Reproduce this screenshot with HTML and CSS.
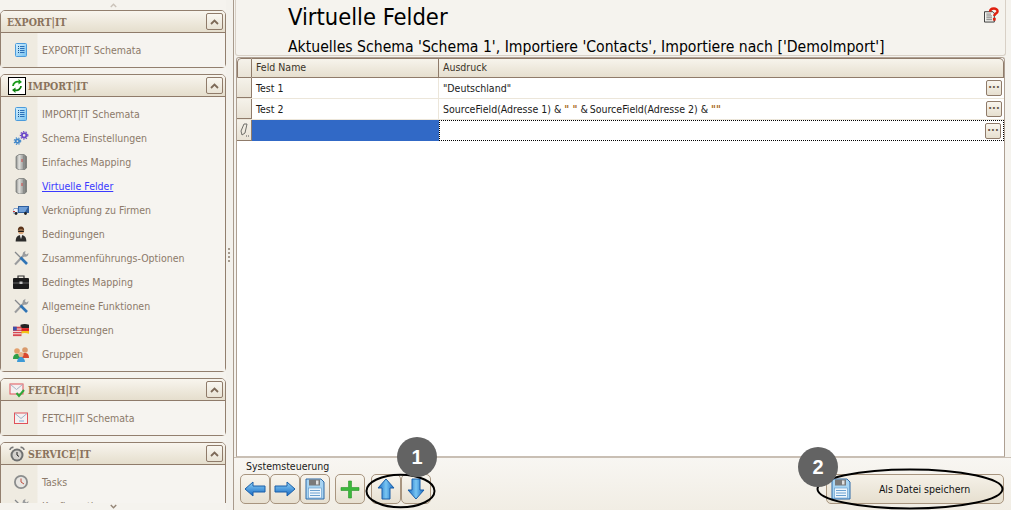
FILE: index.html
```html
<!DOCTYPE html>
<html lang="de">
<head>
<meta charset="utf-8">
<title>Virtuelle Felder</title>
<link rel="stylesheet" href="styles.css">
</head>
<body>
<svg class="defs" width="0" height="0" aria-hidden="true">
  <defs>
    <linearGradient id="blueG" x1="0" y1="0" x2="1" y2="0"><stop offset="0" stop-color="#1468c4"/><stop offset=".5" stop-color="#79c6f2"/><stop offset="1" stop-color="#1468c4"/></linearGradient>
    <linearGradient id="blueH" x1="0" y1="0" x2="0" y2="1"><stop offset="0" stop-color="#8fd3f7"/><stop offset="1" stop-color="#1468c4"/></linearGradient>
    <linearGradient id="paleB" x1="0" y1="0" x2="1" y2="1"><stop offset="0" stop-color="#d6f0fd"/><stop offset="1" stop-color="#76c2f0"/></linearGradient>
    <linearGradient id="barrel" x1="0" y1="0" x2="1" y2="0"><stop offset="0" stop-color="#8a8c8a"/><stop offset=".3" stop-color="#e3e3df"/><stop offset=".55" stop-color="#b5b6b3"/><stop offset="1" stop-color="#6e706e"/></linearGradient>
    <symbol id="i-list" viewBox="0 0 16 16"><rect x="2.500" y="1.500" width="11" height="13" rx="1" fill="url(#paleB)" stroke="#4a9bdc"/><path d="M5 4.500h1M5 6.500h1M5 8.500h1M5 10.500h1" stroke="#17508f"/><path d="M7 4.500h4.500M7 6.500h4.500M7 8.500h4.500M7 10.500h4.500" stroke="#2b6fb8"/></symbol>
    <symbol id="i-gears" viewBox="0 0 18 16"><circle cx="12.500" cy="5" r="2.500" fill="none" stroke="#6a45c8" stroke-width="2"/><circle cx="12.500" cy="5" r="4.200" fill="none" stroke="#6a45c8" stroke-width="1.300" stroke-dasharray="1.500 1.500"/><circle cx="5" cy="11.500" r="2" fill="none" stroke="#3f86c9" stroke-width="2"/><circle cx="5" cy="11.500" r="3.700" fill="none" stroke="#3f86c9" stroke-width="1.200" stroke-dasharray="1.500 1.500"/></symbol>
    <symbol id="i-server" viewBox="0 0 16 16"><path d="M3 2.500 6 .5h5l2.500 2v11.500l-2.500 2H6l-3-2z" fill="url(#barrel)" stroke="#707270" stroke-width=".7"/><path d="M10.500 1.500v14" stroke="#8a8c8a"/><path d="M9 5v3" stroke="#c44"/></symbol>
    <symbol id="i-truck" viewBox="0 0 16 16"><path d="M5 4h11v7H5z" fill="#2f5f9e"/><path d="M6 5h9l-3 5H6z" fill="#6f9fd8"/><path d="M1 6.500h4V11H0V8z" fill="#f2f4f8" stroke="#3d6fb3" stroke-width=".6"/><path d="M0 9.500h2" stroke="#c33"/><circle cx="3" cy="11.500" r="1.400" fill="#222"/><circle cx="12.500" cy="11.500" r="1.400" fill="#222"/></symbol>
    <symbol id="i-man" viewBox="0 0 14 18"><path d="M1 17.500c0-5 2-7.500 6-7.500s6 2.500 6 7.500z" fill="#2b2b2b"/><path d="M5.500 10 7 15l1.500-5z" fill="#e4e4e4"/><circle cx="7" cy="5.500" r="3.500" fill="#d9a67a"/><path d="M3.400 5c0-3 1.500-4.500 3.600-4.500S10.600 2 10.600 5C9 3.500 5 3.500 3.400 5z" fill="#5a3319"/><path d="M3.800 5.200h6.400v1.500H3.800z" fill="#111"/></symbol>
    <symbol id="i-tools" viewBox="0 0 16 16"><path d="M2 14.500 11 5" stroke="#9a9c9e" stroke-width="2"/><path d="M10 2.500 12.500.8 12 3.500l1.500 1 2-1.500c0 3-2 4.500-4.500 3.500L9.500 5z" fill="#9a9c9e"/><path d="M2 2l6 6" stroke="#85888b" stroke-width="1.300"/><path d="M7.500 7.500 14 14" stroke="#2f74b5" stroke-width="2.600"/></symbol>
    <symbol id="i-case" viewBox="0 0 16 14"><path d="M5 3V1h6v2" fill="none" stroke="#333" stroke-width="1.200"/><rect x="0" y="3" width="16" height="11" rx="1" fill="#1b1b1b"/><path d="M0 8h16" stroke="#666"/><rect x="6.500" y="6.500" width="3" height="2.500" fill="#c4c4c4"/></symbol>
    <symbol id="i-flags" viewBox="0 0 17 13"><path d="M8 1c3-1 6-1 9 0v3.500H8z" fill="#222"/><rect x="8" y="4.500" width="9" height="3" fill="#d22"/><path d="M8 7.500h9v3c-3-1-6-1-9 0z" fill="#f2c318"/><rect x="0" y="3" width="9" height="10" fill="#d8474f"/><path d="M0 5.500h9M0 8h9M0 10.500h9" stroke="#f3f0f0"/><rect x="0" y="3" width="4" height="4" fill="#3d4fa8"/></symbol>
    <symbol id="i-users" viewBox="0 0 16 16"><circle cx="4" cy="5" r="2.800" fill="#e3a06c"/><circle cx="12" cy="4" r="2.800" fill="#d99a6c"/><path d="M0 13c0-4 2-5 4-5s4 1 4 5z" fill="#2fa04a"/><path d="M8 12c0-4 2-5 4-5s4 1 4 5z" fill="#d9482f"/><circle cx="8" cy="8.500" r="2.600" fill="#eab48b"/><path d="M4 16c0-3 2-5 4-5s4 2 4 5z" fill="#3d9ad6"/></symbol>
    <symbol id="i-mail" viewBox="0 0 16 16"><rect x="1.500" y="3" width="13" height="10.500" fill="#f4f0f0" stroke="#e0525a"/><path d="M2 3.500l6 5 6-5" fill="none" stroke="#9fb3c8"/><path d="M6 11h5" stroke="#7fb0da"/></symbol>
    <symbol id="i-mailcheck" viewBox="0 0 16 16"><rect x="1" y="2" width="13" height="10" fill="#f4f0f0" stroke="#e0525a"/><path d="M1.500 2.500l6 5 6-5" fill="none" stroke="#a8b4c4"/><path d="M7.500 11l2.500 3 5-6" fill="none" stroke="#2ea83a" stroke-width="2"/></symbol>
    <symbol id="i-clock" viewBox="0 0 16 16"><circle cx="8" cy="8" r="7" fill="#8b8d8d"/><circle cx="8" cy="8" r="5.200" fill="#e8e6e2"/><path d="M8 4.500V8l3 2" fill="none" stroke="#c05040"/></symbol>
    <symbol id="i-alarm" viewBox="0 0 16 16"><circle cx="8" cy="9" r="6.500" fill="#6f7171"/><circle cx="8" cy="9" r="4.500" fill="#d4d2ce"/><path d="M8 6v3l2 1.500" fill="none" stroke="#222"/><path d="M1 4c0-2 2-3 3.500-2.500M15 4c0-2-2-3-3.500-2.500" fill="none" stroke="#777" stroke-width="1.600"/></symbol>
    <symbol id="i-disk" viewBox="0 0 20 22"><path d="M1 1h15l3 3v17H1z" fill="#a8d4f2" stroke="#2f6aa8"/><rect x="4" y="1.500" width="11" height="6" fill="#7a7a7a"/><rect x="11" y="2.500" width="2.500" height="4" fill="#e0e0e0"/><rect x="3.500" y="10" width="13" height="10" fill="#eef6fc" stroke="#5c94c6" stroke-width=".6"/><path d="M5 12.500h10M5 15h10M5 17.500h10" stroke="#6aa0d0"/></symbol>
    <symbol id="i-up" viewBox="0 0 22 22"><path d="M11 1 19 10h-4v11H7V10H3z" fill="url(#blueG)" stroke="#1a5fa8"/></symbol>
    <symbol id="i-down" viewBox="0 0 22 22"><path d="M11 21 19 12h-4V1H7v11H3z" fill="url(#blueG)" stroke="#1a5fa8"/></symbol>
    <symbol id="i-left" viewBox="0 0 22 22"><path d="M1 11 9 4v4h12v6H9v4z" fill="url(#blueH)" stroke="#1a5fa8"/></symbol>
    <symbol id="i-right" viewBox="0 0 22 22"><path d="M21 11 13 4v4H1v6h12v4z" fill="url(#blueH)" stroke="#1a5fa8"/></symbol>
    <symbol id="i-caret" viewBox="0 0 9 6"><path d="M1 5 4.500 1.500 8 5" fill="none" stroke="#7d6a58" stroke-width="1.800"/></symbol>
  </defs>
</svg>

<div class="app">
  <aside class="sidebar">
    <div class="scroll-cue"><svg class="cue-icon"><use href="#i-caret"/></svg></div>
    <div class="panels">
      <section class="panel">
        <header class="panel-head"><span class="head-title">EXPORT|IT</span><span class="collapse"><svg class="caret"><use href="#i-caret"/></svg></span></header>
        <ul class="panel-body">
          <li class="item"><span class="item-icon"><svg class="ico"><use href="#i-list"/></svg></span><a class="item-text">EXPORT|IT Schemata</a></li>
        </ul>
      </section>
      <section class="panel">
        <header class="panel-head"><span class="head-badge badge-boxed"><svg viewBox="0 0 16 16" class="badge-svg"><path d="M4 8a4.500 4.500 0 0 1 6-4" fill="none" stroke="#1a9a1a" stroke-width="1.800"/><path d="M9.500 1l3.500 3-3.500 2.500z" fill="#1a9a1a"/><path d="M12 8a4.500 4.500 0 0 1-6 4" fill="none" stroke="#0f7f0f" stroke-width="1.800"/><path d="M6.500 15 3 12l3.500-2.500z" fill="#0f7f0f"/></svg></span><span class="head-title">IMPORT|IT</span><span class="collapse"><svg class="caret"><use href="#i-caret"/></svg></span></header>
        <ul class="panel-body">
          <li class="item"><span class="item-icon"><svg class="ico"><use href="#i-list"/></svg></span><a class="item-text">IMPORT|IT Schemata</a></li>
          <li class="item"><span class="item-icon"><svg class="ico"><use href="#i-gears"/></svg></span><a class="item-text">Schema Einstellungen</a></li>
          <li class="item"><span class="item-icon"><svg class="ico"><use href="#i-server"/></svg></span><a class="item-text">Einfaches Mapping</a></li>
          <li class="item"><span class="item-icon"><svg class="ico"><use href="#i-server"/></svg></span><a class="item-text is-active">Virtuelle Felder</a></li>
          <li class="item"><span class="item-icon"><svg class="ico"><use href="#i-truck"/></svg></span><a class="item-text">Verknüpfung zu Firmen</a></li>
          <li class="item"><span class="item-icon"><svg class="ico"><use href="#i-man"/></svg></span><a class="item-text">Bedingungen</a></li>
          <li class="item"><span class="item-icon"><svg class="ico"><use href="#i-tools"/></svg></span><a class="item-text">Zusammenführungs-Optionen</a></li>
          <li class="item"><span class="item-icon"><svg class="ico"><use href="#i-case"/></svg></span><a class="item-text">Bedingtes Mapping</a></li>
          <li class="item"><span class="item-icon"><svg class="ico"><use href="#i-tools"/></svg></span><a class="item-text">Allgemeine Funktionen</a></li>
          <li class="item"><span class="item-icon"><svg class="ico"><use href="#i-flags"/></svg></span><a class="item-text">Übersetzungen</a></li>
          <li class="item"><span class="item-icon"><svg class="ico"><use href="#i-users"/></svg></span><a class="item-text">Gruppen</a></li>
        </ul>
      </section>
      <section class="panel">
        <header class="panel-head"><span class="head-badge"><svg class="badge-svg"><use href="#i-mailcheck"/></svg></span><span class="head-title">FETCH|IT</span><span class="collapse"><svg class="caret"><use href="#i-caret"/></svg></span></header>
        <ul class="panel-body">
          <li class="item"><span class="item-icon"><svg class="ico"><use href="#i-mail"/></svg></span><a class="item-text">FETCH|IT Schemata</a></li>
        </ul>
      </section>
      <section class="panel">
        <header class="panel-head"><span class="head-badge"><svg class="badge-svg"><use href="#i-alarm"/></svg></span><span class="head-title">SERVICE|IT</span><span class="collapse"><svg class="caret"><use href="#i-caret"/></svg></span></header>
        <ul class="panel-body">
          <li class="item"><span class="item-icon"><svg class="ico"><use href="#i-clock"/></svg></span><a class="item-text">Tasks</a></li>
          <li class="item"><span class="item-icon"><svg class="ico"><use href="#i-tools"/></svg></span><a class="item-text">Konfiguration</a></li>
        </ul>
      </section>
    </div>
    <div class="scroll-cue scroll-cue-bottom"><svg class="cue-icon cue-down"><use href="#i-caret"/></svg></div>
  </aside>

  <div class="splitter"><span class="grip"></span></div>

  <main class="main">
    <header class="main-head">
      <div class="titles">
        <h1 class="title">Virtuelle Felder</h1>
        <p class="subtitle">Aktuelles Schema 'Schema 1', Importiere 'Contacts', Importiere nach ['DemoImport']</p>
      </div>
      <svg class="help" viewBox="0 0 16 16"><path d="M.500 4.500h9l1.500 1.500v9.500H.500z" fill="#f4f4f0" stroke="#333"/><path d="M2.500 7h5M2.500 9h6M2.500 11h6M2.500 13h6" stroke="#777"/><path d="M6.500 4.500C6.500 0 14.500 0 14.500 4c0 2.500-3.500 2.500-3.500 5" fill="none" stroke="#e02010" stroke-width="2.600"/><rect x="9.500" y="11" width="3" height="3" fill="#e02010"/></svg>
    </header>

    <section class="grid-box">
      <div class="row row-head">
        <div class="cell-ind ind-corner"></div>
        <div class="cell-name cell-h">Feld Name</div>
        <div class="cell-expr cell-h head-last">Ausdruck</div>
      </div>
      <div class="row">
        <div class="cell-ind"></div>
        <div class="cell-name">Test 1</div>
        <div class="cell-expr"><span>"Deutschland"</span><button class="dots">···</button></div>
      </div>
      <div class="row">
        <div class="cell-ind"></div>
        <div class="cell-name">Test 2</div>
        <div class="cell-expr"><span>SourceField(Adresse 1) &amp; <b class="q">" "</b> &amp;&#8201;SourceField(Adresse 2) &amp; <b class="q">""</b></span><button class="dots">···</button></div>
      </div>
      <div class="row row-new">
        <div class="cell-ind"><svg class="pencil" viewBox="0 0 10 14"><path d="M3 12 2 8 5 1h3L6 10z" fill="none" stroke="#6f6f6a"/><path d="M7 13h1M9 13h1" stroke="#555"/></svg></div>
        <div class="cell-name cell-sel"></div>
        <div class="cell-expr cell-focus"><button class="dots">···</button></div>
      </div>
    </section>

    <footer class="toolbar">
      <div class="toolbar-label">Systemsteuerung</div>
      <div class="toolbar-row">
        <div class="tools">
          <button class="tbtn"><svg class="tico"><use href="#i-left"/></svg></button>
          <button class="tbtn"><svg class="tico"><use href="#i-right"/></svg></button>
          <button class="tbtn"><svg class="tico"><use href="#i-disk"/></svg></button>
          <button class="tbtn tbtn-add"><svg class="tico" viewBox="0 0 22 22"><path d="M9.500 3h3v6.500H20v3h-7.500V20h-3v-7.500H2v-3h7.500z" fill="#3cb83c" stroke="#2a962a" stroke-width=".6"/></svg></button>
          <button class="tbtn tbtn-up"><svg class="tico"><use href="#i-up"/></svg></button>
          <button class="tbtn"><svg class="tico"><use href="#i-down"/></svg></button>
        </div>
        <button class="save"><svg class="save-ico"><use href="#i-disk"/></svg><span class="save-text">Als Datei speichern</span></button>
      </div>
    </footer>
  </main>
</div>

<svg class="callout-ring ring-one" viewBox="0 0 72 36"><ellipse cx="36" cy="18" rx="34.500" ry="16.500"/></svg>
<svg class="callout-ring ring-two" viewBox="0 0 188 42"><ellipse cx="94" cy="21" rx="92.500" ry="19.500"/></svg>
<div class="callout badge-one">1</div>
<div class="callout badge-two">2</div>
</body>
</html>
```
FILE: styles.css
```css
* { box-sizing: border-box; }
html, body { margin: 0; padding: 0; }
body {
  width: 1011px;
  height: 510px;
  overflow: hidden;
  position: relative;
  background: #f5f3ee;
  font-family: "DejaVu Sans", sans-serif;
  font-stretch: condensed;
  font-size: 10px;
  color: #1a1a1a;
}
.defs { position: absolute; }
.app { display: flex; width: 1011px; height: 510px; }

/* Sidebar */
.sidebar {
  width: 226px;
  height: 510px;
  flex: none;
  display: flex;
  flex-direction: column;
  overflow: hidden;
  background: #f5f3ee;
}
.scroll-cue { height: 10px; flex: none; display: flex; justify-content: center; align-items: center; }
.cue-icon { width: 7px; height: 5px; opacity: .35; }
.cue-down { transform: rotate(180deg); opacity: .8; }
.panels { flex: 1; min-height: 0; overflow: hidden; display: flex; flex-direction: column; gap: 6px; }
.scroll-cue-bottom { height: 7px; background: #f5f3ee; }
.panel {
  flex: none;
  border: 1px solid #927f6e;
  border-radius: 5px 5px 4px 4px;
  background: #f6f4f0;
}
.panel-head {
  height: 22px;
  display: flex;
  align-items: center;
  padding: 0 2px 0 6px;
  border-bottom: 1px solid #8f7b6a;
  background: linear-gradient(#f8f5ee, #e5decd);
  border-radius: 4px 4px 0 0;
}
.head-title {
  flex: 1;
  font-family: "DejaVu Serif", serif;
  font-stretch: condensed;
  font-weight: 700;
  font-size: 10.5px;
  color: #8a735c;
}
.head-badge {
  width: 16px;
  height: 16px;
  margin: 0 3px 0 2px;
  flex: none;
  display: flex;
}
.badge-svg { width: 16px; height: 16px; }
.badge-boxed { outline: 1px solid #000; background: #fff; }
.collapse {
  width: 17px;
  height: 17px;
  flex: none;
  display: flex;
  align-items: center;
  justify-content: center;
  border: 1px solid #8f7b6a;
  border-radius: 2px;
  background: linear-gradient(#f9f7f1, #e9e3d5);
}
.caret { width: 9px; height: 6px; }
.panel-body { list-style: none; margin: 0; padding: 5px 0; background: linear-gradient(90deg, #efebe1 0, #efebe1 36px, #f6f4f0 37px); }
.item { height: 24px; display: flex; align-items: center; }
.item-icon { width: 36px; flex: none; display: flex; justify-content: center; padding-left: 4px; }
.ico { width: 16px; height: 16px; display: block; }
.item-text { padding-left: 5px; font-size: 10.5px; color: #8c7a6a; white-space: nowrap; }
.is-active { color: #3a3aff; text-decoration: underline; }

/* Splitter */
.splitter {
  width: 8px;
  flex: none;
  display: flex;
  align-items: center;
  justify-content: center;
  border-right: 1px solid #a89a8c;
  background: #f3f1ec;
}
.grip { width: 2px; height: 14px; margin-right: 1px; background: repeating-linear-gradient(#a59a8e 0 2px, transparent 2px 4px); }

/* Main */
.main { flex: 1; min-width: 0; display: flex; flex-direction: column; background: #f5f3ee; }
.main-head {
  height: 56px;
  flex: none;
  display: flex;
  justify-content: space-between;
  margin: 0 5px 0 1px;
  padding: 0 6px 0 52px;
  border: 1px solid #d8d0c6;
  border-top: 0;
  border-radius: 0 0 3px 3px;
}
.title { margin: 0; padding-top: 3px; font-size: 23.5px; line-height: 28px; font-weight: 400; color: #000; }
.subtitle { margin: 0; padding-top: 7px; font-size: 15.63px; line-height: 18px; color: #000; white-space: nowrap; }
.help { width: 15px; height: 16px; margin-top: 7px; flex: none; }

.grid-box {
  flex: 1;
  min-height: 0;
  margin: 1px 6px 0 2px;
  border: 1px solid #ad9f92;
  border-bottom-color: #c9bfb4;
  border-radius: 3px 3px 0 0;
  background: #fff;
}
.row { display: flex; height: 21px; border-bottom: 1px solid #ece6da; }
.row-head { height: 20px; border-bottom: 0; }
.cell-ind {
  width: 15px;
  flex: none;
  display: flex;
  align-items: center;
  justify-content: center;
  background: linear-gradient(#f5f2ea, #e9e3d6);
  border: 1px solid #8f7b6a;
  border-width: 0 1px 1px 0;
}
.ind-corner { border-width: 1px 1px 1px 1px; border-radius: 4px 0 0 0; }
.cell-name { width: 187px; flex: none; display: flex; align-items: center; padding-left: 4px; border-right: 1px solid #ece6da; font-size: 10.5px; }
.cell-expr { flex: 1; min-width: 0; display: flex; align-items: center; justify-content: space-between; padding: 0 2px 0 4px; font-size: 10.5px; white-space: nowrap; }
.cell-h {
  background: linear-gradient(#f7f4ec, #e6dfcf);
  border: 1px solid #8f7b6a;
  border-width: 1px 1px 1px 0;
  color: #3a3328;
  padding-bottom: 2px;
}
.head-last { border-radius: 0 5px 0 0; }
.q { color: #a86a1a; }
.dots {
  width: 16px;
  height: 16px;
  padding: 0;
  border: 1px solid #8f7b6a;
  border-radius: 2px;
  background: linear-gradient(#f8f5ee, #e6dfcf);
  color: #6a5a4a;
  font-size: 10px;
  font-weight: 700;
  line-height: 12px;
  font-family: "DejaVu Sans", sans-serif;
}
.row-new { border-bottom: 0; }
.cell-sel { background: #3169c6; border-right: 0; }
.cell-focus { justify-content: flex-end; border: 1px dotted #000; }
.pencil { width: 10px; height: 14px; }

/* Toolbar */
.toolbar {
  height: 53px;
  flex: none;
  padding: 2px 7px 0 6px;
  border-top: 1px solid #c9bfb4;
  background: linear-gradient(#f8f6f2, #f1ede4);
}
.toolbar-label { height: 14px; padding-left: 6px; font-size: 10.5px; line-height: 12px; color: #1a1a1a; }
.toolbar-row { display: flex; justify-content: space-between; align-items: flex-start; }
.tools { display: flex; }
.tbtn {
  width: 30px;
  height: 30px;
  padding: 0;
  display: flex;
  align-items: center;
  justify-content: center;
  border: 1px solid #a8957f;
  border-radius: 5px;
  background: linear-gradient(#f8f5ee, #e7e0d1);
}
.tbtn-add { margin-left: 5px; }
.tbtn-up { margin-left: 6px; }
.tico { width: 22px; height: 22px; }
.save {
  width: 178px;
  height: 30px;
  padding: 0 5px 0 4px;
  display: flex;
  align-items: center;
  border: 1px solid #a8957f;
  border-radius: 5px;
  background: linear-gradient(#f5f1e8, #e6dfcf);
  font-family: inherit;
  font-stretch: condensed;
}
.save-ico { width: 20px; height: 22px; flex: none; }
.save-text { flex: 1; text-align: center; font-size: 10.5px; color: #111; }

/* Callouts lying over the page */
.callout-ring { position: absolute; fill: none; stroke: #000; stroke-width: 2; }
.ring-one { left: 365px; top: 473px; width: 71px; height: 36px; }
.ring-two { left: 816px; top: 468px; width: 188px; height: 42px; }
.callout {
  position: absolute;
  width: 40px;
  height: 40px;
  border-radius: 50%;
  background: #636363;
  color: #fff;
  font-family: "Liberation Sans", sans-serif;
  font-stretch: normal;
  font-weight: 700;
  font-size: 20px;
  line-height: 40px;
  text-align: center;
}
.badge-one { left: 397px; top: 437px; }
.badge-two { left: 798px; top: 447px; }
```
